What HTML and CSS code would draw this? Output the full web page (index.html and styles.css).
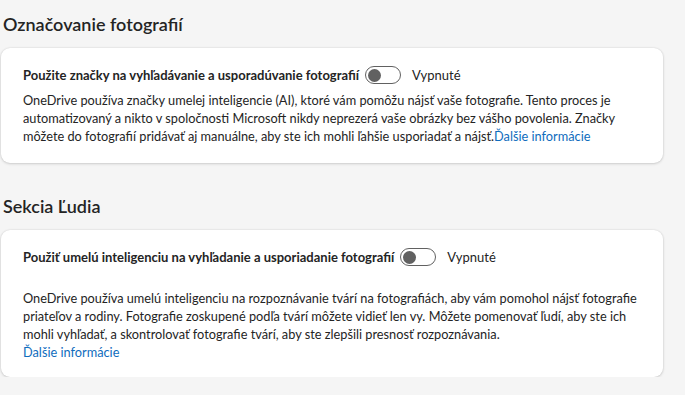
FILE: index.html
```html
<!DOCTYPE html>
<html lang="sk">
<head>
<meta charset="utf-8">
<link rel="stylesheet" href="styles.css">
</head>
<body>
<div class="page">
  <section class="section">
    <h2 class="heading">Označovanie fotografií</h2>
    <div class="card card-tags">
      <div class="row">
        <span class="label">Použite značky na vyhľadávanie a usporadúvanie fotografií</span>
        <span class="switch"><span class="knob"></span></span>
        <span class="state">Vypnuté</span>
      </div>
      <p class="desc">OneDrive používa značky umelej inteligencie (AI), ktoré vám pomôžu nájsť vaše fotografie. Tento proces je<br>automatizovaný a nikto v spoločnosti Microsoft nikdy neprezerá vaše obrázky bez vášho povolenia. Značky<br>môžete do fotografií pridávať aj manuálne, aby ste ich mohli ľahšie usporiadať a nájsť.<a class="link" href="#">Ďalšie informácie</a></p>
    </div>
  </section>
  <section class="section">
    <h2 class="heading">Sekcia Ľudia</h2>
    <div class="card card-people">
      <div class="row">
        <span class="label">Použiť umelú inteligenciu na vyhľadanie a usporiadanie fotografií</span>
        <span class="switch"><span class="knob"></span></span>
        <span class="state">Vypnuté</span>
      </div>
      <p class="desc desc-people">OneDrive používa umelú inteligenciu na rozpoznávanie tvárí na fotografiách, aby vám pomohol nájsť fotografie<br>priateľov a rodiny. Fotografie zoskupené podľa tvárí môžete vidieť len vy. Môžete pomenovať ľudí, aby ste ich<br>mohli vyhľadať, a skontrolovať fotografie tvárí, aby ste zlepšili presnosť rozpoznávania.<br><a class="link" href="#">Ďalšie informácie</a></p>
    </div>
  </section>
</div>
</body>
</html>
```
FILE: styles.css
```css
html, body {
  margin: 0;
  padding: 0;
  background: #f5f5f5;
}
body {
  font-family: Lato, "Noto Sans", sans-serif;
  color: #242424;
  font-size: 13px;
}
.page {
  width: 662px;
  padding: 12px 0 0 1px;
  display: flex;
  flex-direction: column;
  gap: 31px;
}
.heading {
  margin: 0 0 12px 2px;
  font-size: 18px;
  font-weight: 600;
  line-height: 24px;
}
.card {
  background: #ffffff;
  border-radius: 9px;
  box-shadow: 0 0 2px rgba(0,0,0,0.12), 0 1px 3px rgba(0,0,0,0.14);
  padding: 18px 22px 18px 22px;
}
.card-people {
  padding-top: 18px;
  padding-bottom: 16px;
}
.row {
  display: flex;
  align-items: center;
  height: 18px;
}
.label {
  font-weight: 700;
}
.switch {
  margin-left: 6px;
  width: 29px;
  height: 16px;
  border: 1px solid #616161;
  border-radius: 10px;
  display: flex;
  align-items: center;
  padding: 0 3px 0 2px;
  box-sizing: content-box;
}
.knob {
  width: 13px;
  height: 13px;
  border-radius: 50%;
  background: #616161;
}
.state {
  margin-left: 11px;
}
.desc {
  margin: 7px 0 0 0;
  line-height: 18px;
  font-size: 12.75px;
  white-space: nowrap;
}
.desc-people {
  margin-top: 23px;
}
.link {
  color: #0f6cbd;
  text-decoration: none;
}
```
